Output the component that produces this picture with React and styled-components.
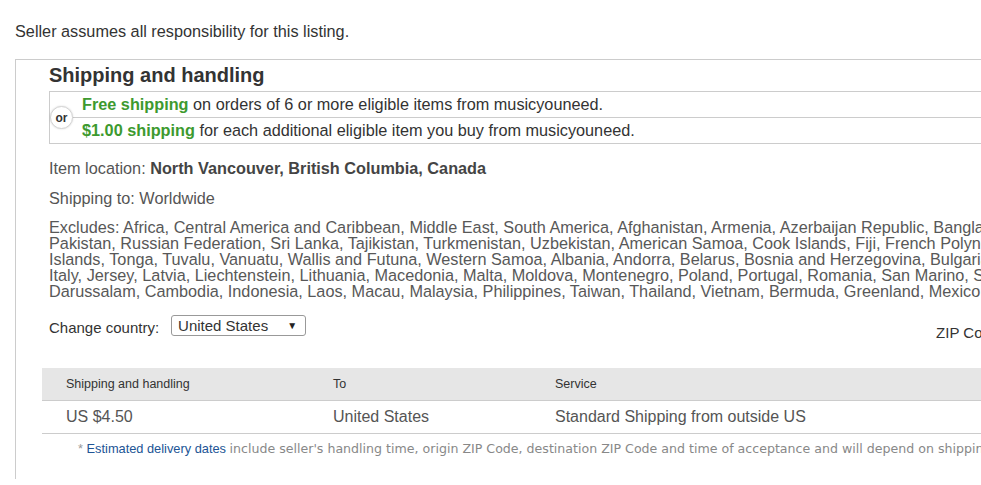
import React from 'react';
import styled, { createGlobalStyle } from 'styled-components';

const GlobalStyle = createGlobalStyle`
  body {
    margin: 0;
    background: #fff;
    font-family: "Liberation Sans", Arial, sans-serif;
    overflow: hidden;
  }
`;

const excludes = [
  'Excludes: Africa, Central America and Caribbean, Middle East, South America, Afghanistan, Armenia, Azerbaijan Republic, Bangladesh, Bhutan, China, Georgia, India, Kazakhstan,',
  'Pakistan, Russian Federation, Sri Lanka, Tajikistan, Turkmenistan, Uzbekistan, American Samoa, Cook Islands, Fiji, French Polynesia, Guam, Kiribati, Marshall Islands, Solomon',
  'Islands, Tonga, Tuvalu, Vanuatu, Wallis and Futuna, Western Samoa, Albania, Andorra, Belarus, Bosnia and Herzegovina, Bulgaria, Croatia, Republic of, Cyprus, Estonia,',
  'Italy, Jersey, Latvia, Liechtenstein, Lithuania, Macedonia, Malta, Moldova, Montenegro, Poland, Portugal, Romania, San Marino, Serbia, Slovakia, Slovenia, Ukraine, Brunei',
  'Darussalam, Cambodia, Indonesia, Laos, Macau, Malaysia, Philippines, Taiwan, Thailand, Vietnam, Bermuda, Greenland, Mexico, Saint Pierre and Miquelon',
];

const App = () => {
  return (
    <Page>
      <GlobalStyle />
      <Notice>Seller assumes all responsibility for this listing.</Notice>
      <Panel>
        <Section>
          <Heading>Shipping and handling</Heading>
          <PromoBox>
            <PromoRow>
              <Green>Free shipping</Green>&nbsp;on orders of 6 or more eligible items from musicyouneed.
            </PromoRow>
            <PromoRow divided>
              <Green>$1.00 shipping</Green>&nbsp;for each additional eligible item you buy from musicyouneed.
            </PromoRow>
            <OrBadge>or</OrBadge>
          </PromoBox>

          <InfoLine top={14}>
            Item location: <strong>North Vancouver, British Columbia, Canada</strong>
          </InfoLine>
          <InfoLine top={10}>Shipping to: Worldwide</InfoLine>

          <Excludes>
            {excludes.map((line) => (
              <div key={line}>{line}</div>
            ))}
          </Excludes>

          <CountryRow>
            <Label>Change country:</Label>
            <Select>
              <span>United States</span>
              <Arrow>▼</Arrow>
            </Select>
            <ZipLabel>ZIP Code:</ZipLabel>
          </CountryRow>
        </Section>

        <Table>
          <HeadRow>
            <HeadCell>Shipping and handling</HeadCell>
            <HeadCell>To</HeadCell>
            <HeadCell>Service</HeadCell>
            <HeadCell>Delivery*</HeadCell>
          </HeadRow>
          <BodyRow>
            <Cell>US $4.50</Cell>
            <Cell>United States</Cell>
            <Cell>Standard Shipping from outside US</Cell>
            <Cell />
          </BodyRow>
        </Table>

        <Footnote>
          <Star>*</Star> <Link>Estimated delivery dates</Link>{' '}
          <Note>
            include seller's handling time, origin ZIP Code, destination ZIP Code and time of acceptance and will depend on shipping service selected and receipt of cleared payment.
          </Note>
        </Footnote>
      </Panel>
    </Page>
  );
};

const Page = styled.div`
  width: 1600px;
  padding-top: 21px;
`;

const Notice = styled.p`
  margin: 0 0 18px 15px;
  font-size: 16.25px;
  line-height: 20px;
  color: #333;
`;

const Panel = styled.div`
  margin-left: 15px;
  width: 1560px;
  height: 420px;
  border-top: 1px solid #ccc;
  border-left: 1px solid #ccc;
  padding: 4px 0 0 26px;
  box-sizing: border-box;
`;

const Section = styled.div`
  padding-left: 7px;
`;

const Heading = styled.h2`
  margin: 0 0 5px;
  font-size: 20px;
  line-height: 22px;
  font-weight: bold;
  color: #333;
`;

const PromoBox = styled.div`
  position: relative;
  border: 1px solid #ccc;
  border-right: none;
`;

const PromoRow = styled.div`
  display: flex;
  align-items: center;
  height: 25px;
  padding-left: 32px;
  font-size: 16.25px;
  color: #333;
  white-space: nowrap;
  border-top: ${(p) => (p.divided ? '1px solid #ccc' : 'none')};
`;

const Green = styled.b`
  color: #3d9a2f;
`;

const OrBadge = styled.div`
  position: absolute;
  left: 0;
  top: 14px;
  width: 21px;
  height: 21px;
  border: 1px solid #d4d4d4;
  border-radius: 50%;
  background: #fff;
  box-shadow: 0 0 2px rgba(0, 0, 0, 0.15);
  display: flex;
  align-items: center;
  justify-content: center;
  font-size: 12px;
  font-weight: bold;
  color: #333;
`;

const InfoLine = styled.div`
  margin-top: ${(p) => p.top}px;
  font-size: 16.25px;
  line-height: 20px;
  color: #555;

  strong {
    color: #444;
  }
`;

const Excludes = styled.div`
  margin-top: 11px;
  font-size: 16.25px;
  line-height: 16px;
  color: #585858;
  white-space: nowrap;
`;

const CountryRow = styled.div`
  display: flex;
  align-items: center;
  margin-top: 16px;
  height: 21px;
`;

const Label = styled.span`
  font-size: 15px;
  color: #333;
  margin-right: 12px;
  padding-top: 3px;
`;

const Select = styled.div`
  display: flex;
  align-items: center;
  justify-content: space-between;
  width: 135px;
  height: 21px;
  box-sizing: border-box;
  padding: 0 8px 0 6px;
  border: 1px solid #999;
  border-radius: 3px;
  font-size: 15px;
  color: #333;
`;

const Arrow = styled.span`
  font-size: 10px;
  color: #222;
`;

const ZipLabel = styled.span`
  margin-left: 630px;
  margin-top: 14px;
  font-size: 15px;
  color: #333;
`;

const Table = styled.div`
  margin-top: 32px;
  width: 1500px;
`;

const HeadRow = styled.div`
  display: grid;
  grid-template-columns: 267px 222px 460px 1fr;
  height: 32px;
  align-items: center;
  background: #e6e6e6;
  border-bottom: 1px solid #ccc;
`;

const HeadCell = styled.div`
  padding-left: 24px;
  font-size: 12.5px;
  color: #333;
`;

const BodyRow = styled.div`
  display: grid;
  grid-template-columns: 267px 222px 460px 1fr;
  height: 32px;
  align-items: center;
  border-bottom: 1px solid #ccc;
`;

const Cell = styled.div`
  padding-left: 24px;
  font-size: 16px;
  color: #555;
`;

const Footnote = styled.div`
  padding-left: 36px;
  margin-top: 7px;
  font-size: 12.8px;
  white-space: nowrap;
`;

const Star = styled.span`
  color: #999;
`;

const Link = styled.span`
  color: #215495;
`;

const Note = styled.span`
  font-family: "DejaVu Sans", Verdana, sans-serif;
  font-size: 12.6px;
  color: #888;
`;

export default App;
